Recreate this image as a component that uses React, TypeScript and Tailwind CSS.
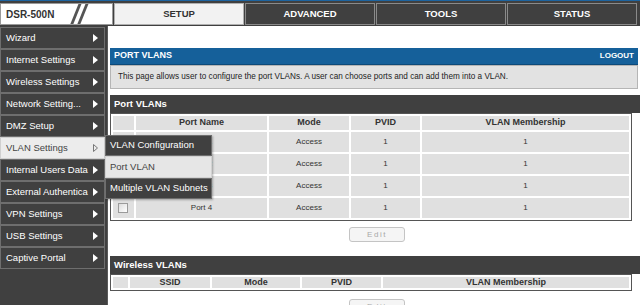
import React from 'react'

const menu = [
  'Wizard',
  'Internet Settings',
  'Wireless Settings',
  'Network Setting...',
  'DMZ Setup',
  'VLAN Settings',
  'Internal Users Data',
  'External Authentica',
  'VPN Settings',
  'USB Settings',
  'Captive Portal',
]

const tabs = ['SETUP', 'ADVANCED', 'TOOLS', 'STATUS']

const ports = ['Port 1', 'Port 2', 'Port 3', 'Port 4']

function Arrow({ hollow }: { hollow?: boolean }) {
  return (
    <svg width="5" height="8" viewBox="0 0 5 8" className="shrink-0">
      {hollow ? (
        <path d="M0.5 0.5 L4.5 4 L0.5 7.5 Z" fill="none" stroke="#777" strokeWidth="1" />
      ) : (
        <path d="M0 0 L5 4 L0 8 Z" fill="#fff" />
      )}
    </svg>
  )
}

function Checkbox() {
  return <span className="block w-[10px] h-[10px] border border-[#9a9a9a] bg-gradient-to-br from-[#dcdcdc] to-white" />
}

function EditButton() {
  return (
    <div className="flex justify-center pl-[6px]">
      <button
        disabled
        className="w-[56px] h-[15px] rounded-[3px] border border-[#c4c4c4] bg-[#f5f5f5] text-[8px] text-[#a8a8a8] tracking-[1.5px] leading-none"
      >
        Edit
      </button>
    </div>
  )
}

export default function App() {
  return (
    <div className="w-[640px] h-[305px] overflow-hidden bg-white font-['Liberation_Sans',Arial,sans-serif]">
      <div className="h-[1px] bg-[#1d64a0]" />
      {/* top tabs */}
      <div className="flex h-[25px] bg-[#404040] pt-[2px] pb-[1px]">
        <div className="w-[113px] h-[22px] bg-white border border-[#9a9a9a] flex items-center pl-[5px] relative overflow-hidden">
          <span className="text-[10px] font-bold text-[#333]">DSR-500N</span>
          <span className="absolute left-[73px] top-[-2px] w-[3px] h-[26px] bg-[#555] skew-x-[-22deg]" />
          <span className="absolute left-[80px] top-[-2px] w-[3px] h-[26px] bg-[#555] skew-x-[-22deg]" />
        </div>
        <div className="flex gap-[1px] ml-[1px]">
          {tabs.map((t, i) => (
            <div
              key={t}
              className={
                i === 0
                  ? 'w-[130px] h-[22px] flex items-center justify-center bg-[#f2f2f2] border border-[#b0b0b0] text-[9.5px] font-bold text-[#333]'
                  : 'w-[130px] h-[22px] flex items-center justify-center bg-[#404040] border border-[#8a8a8a] text-[9.5px] font-bold text-white'
              }
            >
              {t}
            </div>
          ))}
        </div>
      </div>

      <div className="flex">
        {/* sidebar */}
        <div className="w-[108px] h-[280px] bg-[#404040] border-r border-[#5a5a5a] pt-[1px] shrink-0">
          {menu.map((m) => {
            const active = m === 'VLAN Settings'
            return (
              <div key={m} className="relative">
                <div
                  className={
                    active
                      ? 'w-[105px] h-[22px] flex items-center justify-between pl-[5px] pr-[6px] bg-[#ececec] border border-[#d0d0d0] text-[9.5px] text-[#444]'
                      : 'w-[105px] h-[22px] flex items-center justify-between pl-[5px] pr-[6px] bg-[#404040] border border-[#6e6e6e] text-[9.5px] text-white'
                  }
                >
                  <span className="whitespace-nowrap">{m}</span>
                  <Arrow hollow={active} />
                </div>
                {active && (
                  <div className="absolute left-[105px] top-[-2px] z-10 w-[107px] flex flex-col shadow-[1px_1px_2px_rgba(0,0,0,0.3)]">
                    <div className="h-[21px] flex items-center pl-[4px] bg-[#404040] border border-[#6e6e6e] text-[9.5px] text-white whitespace-nowrap">
                      VLAN Configuration
                    </div>
                    <div className="h-[22px] flex items-center pl-[4px] bg-[#e6e6e6] border border-[#d2d2d2] text-[9.5px] text-[#444] whitespace-nowrap">
                      Port VLAN
                    </div>
                    <div className="h-[21px] flex items-center pl-[4px] bg-[#404040] border border-[#6e6e6e] text-[9.5px] text-white whitespace-nowrap">
                      Multiple VLAN Subnets
                    </div>
                  </div>
                )}
              </div>
            )
          })}
        </div>

        {/* content */}
        <div className="flex-1 pt-[22px] pl-[2px] pr-[2px]">
          <div className="h-[17px] bg-[#15609a] flex items-center justify-between px-[4px] border-b border-[#0d4a7a]">
            <span className="text-[9px] font-bold text-white">PORT VLANS</span>
            <span className="text-[8px] font-bold text-white">LOGOUT</span>
          </div>
          <div className="h-[24px] bg-[#e2e2e2] border border-[#b5b5b5] flex items-center pl-[7px] text-[8.2px] text-[#222] whitespace-nowrap">
            This page allows user to configure the port VLANs. A user can choose ports and can add them into a VLAN.
          </div>

          <div className="mt-[6px] mr-[-2px] h-[18px] bg-[#404040] flex items-center pl-[4px] text-[9.5px] font-bold text-white">
            Port VLANs
          </div>
          <table className="w-[522px] border-separate border-spacing-[2px] border border-[#555] text-[8px] text-[#333] text-center">
            <thead>
              <tr className="h-[14px]">
                <th className="w-[21px] h-[14px] p-0 bg-[#e0e0e0]" />
                <th className="w-[131px] p-0 bg-[#e0e0e0] text-[9px] font-bold">Port Name</th>
                <th className="w-[80px] p-0 bg-[#e0e0e0] text-[9px] font-bold">Mode</th>
                <th className="w-[69px] p-0 bg-[#e0e0e0] text-[9px] font-bold">PVID</th>
                <th className="p-0 bg-[#e0e0e0] text-[9px] font-bold">VLAN Membership</th>
              </tr>
            </thead>
            <tbody>
              {ports.map((p) => (
                <tr key={p} className="h-[20px]">
                  <td className="h-[20px] p-0 bg-[#e0e0e0] pl-[5px]">
                    <Checkbox />
                  </td>
                  <td className="p-0 bg-[#e0e0e0]">{p}</td>
                  <td className="p-0 bg-[#e0e0e0]">Access</td>
                  <td className="p-0 bg-[#e0e0e0]">1</td>
                  <td className="p-0 bg-[#e0e0e0]">1</td>
                </tr>
              ))}
            </tbody>
          </table>

          <div className="mt-[6px]">
            <EditButton />
          </div>

          <div className="mt-[14px] mr-[-2px] h-[18px] bg-[#404040] flex items-center pl-[4px] text-[9.5px] font-bold text-white">
            Wireless VLANs
          </div>
          <table className="w-[522px] border-separate border-spacing-[2px] border border-[#555] text-[8px] text-[#333] text-center">
            <thead>
              <tr className="h-[11px]">
                <th className="w-[15px] h-[11px] p-0 bg-[#e0e0e0]" />
                <th className="w-[80px] p-0 bg-[#e0e0e0] text-[9px] leading-[11px] font-bold">SSID</th>
                <th className="w-[88px] p-0 bg-[#e0e0e0] text-[9px] leading-[11px] font-bold">Mode</th>
                <th className="w-[79px] p-0 bg-[#e0e0e0] text-[9px] leading-[11px] font-bold">PVID</th>
                <th className="p-0 bg-[#e0e0e0] text-[9px] leading-[11px] font-bold">VLAN Membership</th>
              </tr>
            </thead>
          </table>

          <div className="mt-[8px]">
            <EditButton />
          </div>
        </div>
      </div>
    </div>
  )
}
